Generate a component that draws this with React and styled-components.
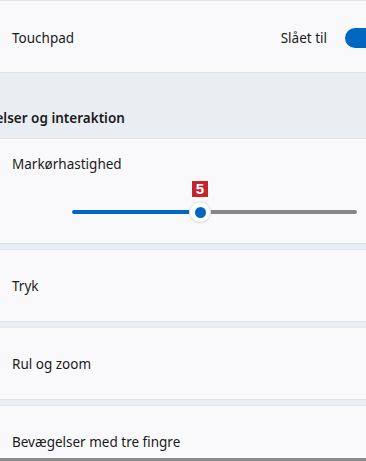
import React from 'react'
import styled, { createGlobalStyle } from 'styled-components'

const Global = createGlobalStyle`
  html, body { margin: 0; padding: 0; }
  body {
    font-family: "Noto Sans", "Open Sans", "Liberation Sans", sans-serif;
    background: #e9eef3;
    color: #1b1b1b;
  }
`

const Page = styled.div`
  height: 461px;
  box-sizing: border-box;
  overflow: hidden;
  border-bottom: 3px solid #8b8b8b;
  display: flex;
  flex-direction: column;
  background: #e9eef3;
`

const Card = styled.div`
  flex: none;
  background: #f9f9fb;
  border-top: 1px solid #e1e6eb;
  border-bottom: 1px solid #dde3e9;
  box-sizing: border-box;
  min-height: ${p => p.$h || 73}px;
  padding: ${p => p.$pad || '0 0 0 12px'};
  display: flex;
  flex-direction: ${p => (p.$column ? 'column' : 'row')};
  align-items: ${p => (p.$column ? 'stretch' : 'center')};
  margin-top: ${p => p.$gap || 0}px;
`

const Label = styled.span`
  font-size: 13.5px;
  line-height: 20px;
  color: #1b1b1b;
  flex: 1;
`

const State = styled.span`
  font-size: 13.5px;
  color: #1b1b1b;
  margin-right: 18px;
`

const Toggle = styled.div`
  width: 40px;
  height: 20px;
  border-radius: 10px;
  background: #0067c0;
  margin-right: -19px;
`

const Section = styled.div`
  flex: none;
  height: 65px;
  box-sizing: border-box;
  padding-top: 35px;
  font-size: 13.5px;
  font-weight: 600;
  line-height: 20px;
  color: #1b1b1b;
  white-space: nowrap;
  overflow: hidden;
`

const SliderWrap = styled.div`
  position: relative;
  margin: 36px 9px 0 60px;
  height: 4px;
  display: flex;
`

const Fill = styled.div`
  height: 4px;
  border-radius: 2px;
  background: #0067c0;
`

const Rest = styled.div`
  flex: 1;
  height: 4px;
  border-radius: 2px;
  background: #878787;
`

const Thumb = styled.div`
  position: absolute;
  top: 50%;
  width: 20px;
  height: 20px;
  margin: -10px 0 0 -10px;
  border-radius: 50%;
  background: #fff;
  box-shadow: 0 0 0 1px #e3e3e3, 0 1px 2px rgba(0, 0, 0, 0.15);
  display: flex;
  align-items: center;
  justify-content: center;
  &::after {
    content: '';
    width: 11px;
    height: 11px;
    border-radius: 50%;
    background: #0067c0;
  }
`

const Badge = styled.div`
  position: absolute;
  bottom: 17px;
  width: 16px;
  height: 16px;
  margin-left: -8px;
  background: #c4262e;
  color: #fff;
  font-family: "Liberation Sans", Arial, sans-serif;
  font-weight: 700;
  font-size: 15px;
  line-height: 16px;
  text-align: center;
`

function Slider({ value, max }) {
  const total = 285
  const pos = Math.round((value / max) * total)
  return (
    <SliderWrap>
      <Fill style={{ width: pos }} />
      <Rest />
      <Thumb style={{ left: pos }} />
      <Badge style={{ left: pos }}>{value}</Badge>
    </SliderWrap>
  )
}

export default function App() {
  return (
    <>
      <Global />
      <Page>
        <Card $pad="3px 0 0 12px">
          <Label>Touchpad</Label>
          <State>Slået til</State>
          <Toggle />
        </Card>
        <Section style={{ textIndent: -49 }}>Bevægelser og interaktion</Section>
        <Card $column $h={106} $pad="15px 0 0 12px">
          <Label style={{ flex: 'none' }}>Markørhastighed</Label>
          <Slider value={5} max={11.1} />
        </Card>
        <Card $gap={5}>
          <Label>Tryk</Label>
        </Card>
        <Card $gap={5}>
          <Label>Rul og zoom</Label>
        </Card>
        <Card $gap={5}>
          <Label>Bevægelser med tre fingre</Label>
        </Card>
      </Page>
    </>
  )
}
